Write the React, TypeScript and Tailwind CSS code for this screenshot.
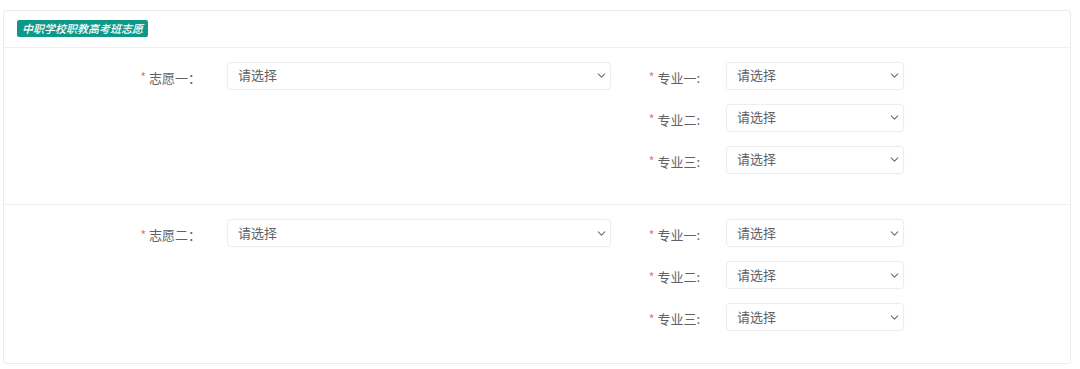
import { ChevronDown } from "lucide-react";

type Choice = {
  label: string;
  majors: string[];
};

const choices: Choice[] = [
  { label: "志愿一：", majors: ["专业一:", "专业二:", "专业三:"] },
  { label: "志愿二：", majors: ["专业一:", "专业二:", "专业三:"] },
];

const Select = ({ width }: { width: string }) => (
  <div
    className={`flex items-center justify-between h-[28px] rounded-[4px] border border-[#ebedf1] bg-white pl-[10px] pr-[2px] text-[13px] text-[#606266] shadow-[0_0_2px_rgba(0,0,0,0.04)] ${width}`}
  >
    <span className="-mt-[2px]">请选择</span>
    <ChevronDown size={13} strokeWidth={2} className="text-[#6b6e74]" />
  </div>
);

const Label = ({ text, width }: { text: string; width: string }) => (
  <div
    className={`flex items-center justify-end h-[28px] pt-[3px] text-[13px] text-[#606266] ${width}`}
  >
    <span className="text-[#f56c6c] mr-[3px] text-[12px]">*</span>
    <span>{text}</span>
  </div>
);

export default function App() {
  return (
    <div
      className="bg-white w-[1080px] h-[369px] pt-[10px] pl-[3px]"
      style={{ fontFamily: '"Noto Sans CJK SC", "Noto Sans", sans-serif' }}
    >
      <div className="w-[1068px] h-[354px] rounded-[4px] border border-[#e9ebef] bg-white flex flex-col">
        <div className="h-[37px] border-b border-[#eef0f3] flex items-center pl-[13px]">
          <span className="h-[17px] flex items-center rounded-[2px] bg-[#0d988a] px-[5px] text-[11px] italic font-medium text-white leading-none">
            中职学校职教高考班志愿
          </span>
        </div>
        {choices.map((c, i) => (
          <div
            key={i}
            className={`flex items-start pt-[14px] h-[158px] ${
              i === 0 ? "border-b border-[#eef0f3]" : ""
            }`}
          >
            <Label text={c.label} width="w-[197px]" />
            <div className="ml-[26px]">
              <Select width="w-[384px]" />
            </div>
            <div className="flex flex-col gap-[14px]">
              {c.majors.map((m) => (
                <div key={m} className="flex items-start">
                  <Label text={m} width="w-[89px]" />
                  <div className="ml-[26px]">
                    <Select width="w-[178px]" />
                  </div>
                </div>
              ))}
            </div>
          </div>
        ))}
      </div>
    </div>
  );
}
